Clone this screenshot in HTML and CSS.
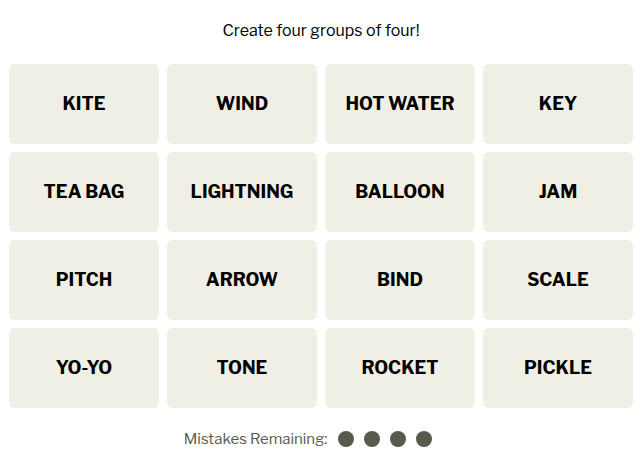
FILE: index.html
```html
<!DOCTYPE html>
<html>
<head>
<meta charset="utf-8">
<link rel="stylesheet" href="styles.css">
</head>
<body>
<div class="game">
  <p class="title">Create four groups of four!</p>
  <div class="grid">
    <div class="tile">KITE</div>
    <div class="tile">WIND</div>
    <div class="tile">HOT WATER</div>
    <div class="tile">KEY</div>
    <div class="tile">TEA BAG</div>
    <div class="tile">LIGHTNING</div>
    <div class="tile">BALLOON</div>
    <div class="tile">JAM</div>
    <div class="tile">PITCH</div>
    <div class="tile">ARROW</div>
    <div class="tile">BIND</div>
    <div class="tile">SCALE</div>
    <div class="tile">YO-YO</div>
    <div class="tile">TONE</div>
    <div class="tile">ROCKET</div>
    <div class="tile">PICKLE</div>
  </div>
  <div class="mistakes">
    <span class="label">Mistakes Remaining:</span>
    <span class="dots"><span class="dot"></span><span class="dot"></span><span class="dot"></span><span class="dot"></span></span>
  </div>
</div>
</body>
</html>
```
FILE: styles.css
```css
html, body {
  margin: 0;
  padding: 0;
  background: #fff;
}
.game {
  padding: 0 9px;
  font-family: "Libre Franklin", Roboto, "Liberation Sans", sans-serif;
  color: #000;
}
.title {
  margin: 0;
  padding-top: 20px;
  height: 64px;
  box-sizing: border-box;
  text-align: center;
  font-size: 16px;
  line-height: 22px;
  font-weight: 400;
}
.grid {
  display: grid;
  grid-template-columns: repeat(4, 150px);
  grid-auto-rows: 80px;
  gap: 8px;
}
.tile {
  background: #efefe6;
  border-radius: 6px;
  display: flex;
  align-items: center;
  justify-content: center;
  padding-bottom: 2px;
  box-sizing: border-box;
  font-weight: 700;
  font-size: 18px;
  color: #000;
}
.mistakes {
  display: flex;
  align-items: center;
  justify-content: center;
  gap: 11px;
  height: 22px;
  margin-top: 20px;
  padding-right: 26px;
  font-size: 15px;
  color: #5a594e;
}
.dots {
  display: flex;
  gap: 10px;
}
.dot {
  width: 16px;
  height: 16px;
  border-radius: 50%;
  background: #5a594e;
}
```
